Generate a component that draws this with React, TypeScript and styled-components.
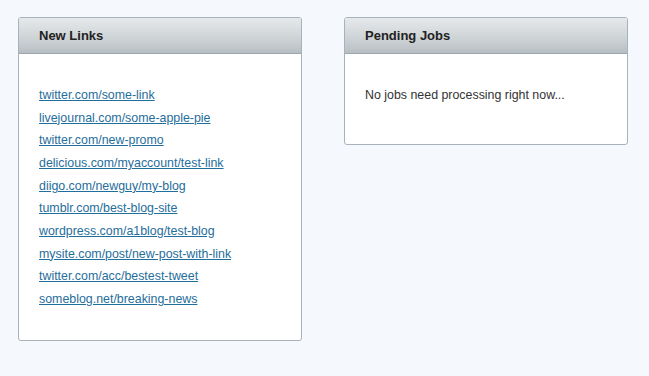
import * as React from "react";
import styled, { createGlobalStyle } from "styled-components";

const GlobalStyle = createGlobalStyle`
  html, body {
    margin: 0;
    background: #f5f9fd;
    font-family: "Liberation Sans", Arial, sans-serif;
  }
`;

const Page = styled.div`
  display: flex;
  align-items: flex-start;
  gap: 42px;
  padding: 17px 18px;
`;

const Panel = styled.section`
  width: 282px;
  background: #fff;
  border: 1px solid #a9b2ba;
  border-radius: 3px;
  overflow: hidden;
`;

const PanelHeader = styled.h2`
  margin: 0;
  height: 35px;
  line-height: 36px;
  padding: 0 20px;
  font-size: 13px;
  font-weight: bold;
  color: #222;
  background: linear-gradient(to bottom, #e6e9eb 0%, #cfd4d7 55%, #b8bfc3 100%);
  border-bottom: 1px solid #9ea7ae;
`;

const PanelBody = styled.div<{ $bottom: number }>`
  padding: 30px 20px ${(p) => p.$bottom}px;
  font-size: 12.4px;
  line-height: 22.67px;
  color: #333;
`;

const LinkList = styled.ul`
  list-style: none;
  margin: 0;
  padding: 0;
`;

const LinkItem = styled.a`
  color: #1f6e9c;
  text-decoration: underline;
`;

const Message = styled.p`
  margin: 0;
`;

const links = [
  "twitter.com/some-link",
  "livejournal.com/some-apple-pie",
  "twitter.com/new-promo",
  "delicious.com/myaccount/test-link",
  "diigo.com/newguy/my-blog",
  "tumblr.com/best-blog-site",
  "wordpress.com/a1blog/test-blog",
  "mysite.com/post/new-post-with-link",
  "twitter.com/acc/bestest-tweet",
  "someblog.net/breaking-news",
];

export default function App() {
  return (
    <>
      <GlobalStyle />
      <Page>
        <Panel>
          <PanelHeader>New Links</PanelHeader>
          <PanelBody $bottom={29}>
            <LinkList>
              {links.map((link) => (
                <li key={link}>
                  <LinkItem href="#">{link}</LinkItem>
                </li>
              ))}
            </LinkList>
          </PanelBody>
        </Panel>
        <Panel>
          <PanelHeader>Pending Jobs</PanelHeader>
          <PanelBody $bottom={37}>
            <Message>No jobs need processing right now...</Message>
          </PanelBody>
        </Panel>
      </Page>
    </>
  );
}
